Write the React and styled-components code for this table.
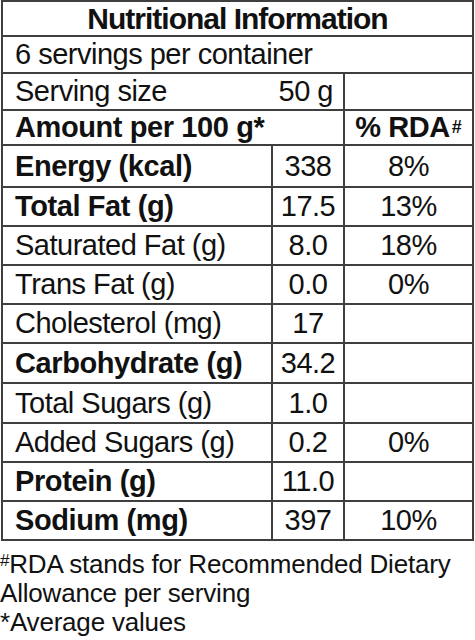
import React from "react";
import styled, { createGlobalStyle } from "styled-components";

const GlobalStyle = createGlobalStyle`
  html, body {
    margin: 0;
    padding: 0;
    background: #ffffff;
  }
  body {
    font-family: "Liberation Sans", Arial, sans-serif;
    color: #111111;
  }
`;

const Page = styled.div`
  width: 475px;
  display: flex;
  flex-direction: column;
`;

const Table = styled.div`
  display: grid;
  grid-template-columns: 268px 70px 127px;
  grid-template-rows: 33px 35px 35px 33px 40px 37px 37px 37px 37px 38px 38px 37px 37px 37px;
  gap: 2px;
  padding: 2px;
  background: #3f3f3f;
  margin-left: 1px;
  width: max-content;
`;

const Cell = styled.div`
  background: #ffffff;
  display: flex;
  align-items: center;
  justify-content: ${(p) =>
    p.$align === "center" ? "center" : p.$align === "right" ? "flex-end" : "flex-start"};
  grid-column: ${(p) => (p.$span ? `span ${p.$span}` : "auto")};
  padding: ${(p) => (p.$align === "center" ? "0" : "0 10px 0 12px")};
  font-size: ${(p) => (p.$title ? "30px" : "29px")};
  letter-spacing: ${(p) => (p.$title ? "-1px" : p.$bold ? "-0.4px" : "-0.5px")};
  font-weight: ${(p) => (p.$bold ? 700 : 400)};
  line-height: 1;
  white-space: nowrap;
  color: #111111;
`;

const SplitCell = styled(Cell)`
  justify-content: space-between;
`;

const Sup = styled.span`
  display: inline-block;
  font-size: 18px;
  line-height: 1;
  align-self: flex-start;
  margin-top: 7px;
  margin-left: 2px;
  letter-spacing: 0;
`;

const FootSup = styled.sup`
  font-size: 17px;
  line-height: 0;
  vertical-align: 7px;
`;

const Footer = styled.div`
  margin-top: 9px;
  font-size: 26px;
  letter-spacing: -0.2px;
  line-height: 29px;
  color: #111111;
`;

const rows = [
  { label: "Energy (kcal)", value: "338", rda: "8%", bold: true },
  { label: "Total Fat (g)", value: "17.5", rda: "13%", bold: true },
  { label: "Saturated Fat (g)", value: "8.0", rda: "18%" },
  { label: "Trans Fat (g)", value: "0.0", rda: "0%" },
  { label: "Cholesterol (mg)", value: "17", rda: "" },
  { label: "Carbohydrate (g)", value: "34.2", rda: "", bold: true },
  { label: "Total Sugars (g)", value: "1.0", rda: "" },
  { label: "Added Sugars (g)", value: "0.2", rda: "0%" },
  { label: "Protein (g)", value: "11.0", rda: "", bold: true },
  { label: "Sodium (mg)", value: "397", rda: "10%", bold: true },
];

export default function App() {
  return (
    <Page>
      <GlobalStyle />
      <Table>
        <Cell $span={3} $align="center" $bold $title>
          Nutritional Information
        </Cell>
        <Cell $span={3}>6 servings per container</Cell>
        <SplitCell $span={2}>
          <span>Serving size</span>
          <span>50 g</span>
        </SplitCell>
        <Cell />
        <Cell $span={2} $bold>
          Amount per 100 g*
        </Cell>
        <Cell $align="center" $bold>
          % RDA<Sup>#</Sup>
        </Cell>
        {rows.map((r) => (
          <React.Fragment key={r.label}>
            <Cell $bold={r.bold}>{r.label}</Cell>
            <Cell $align="center">{r.value}</Cell>
            <Cell $align="center">{r.rda}</Cell>
          </React.Fragment>
        ))}
      </Table>
      <Footer>
        <FootSup>#</FootSup>RDA stands for Recommended Dietary
        <br />
        Allowance per serving
        <br />
        *Average values
      </Footer>
    </Page>
  );
}
